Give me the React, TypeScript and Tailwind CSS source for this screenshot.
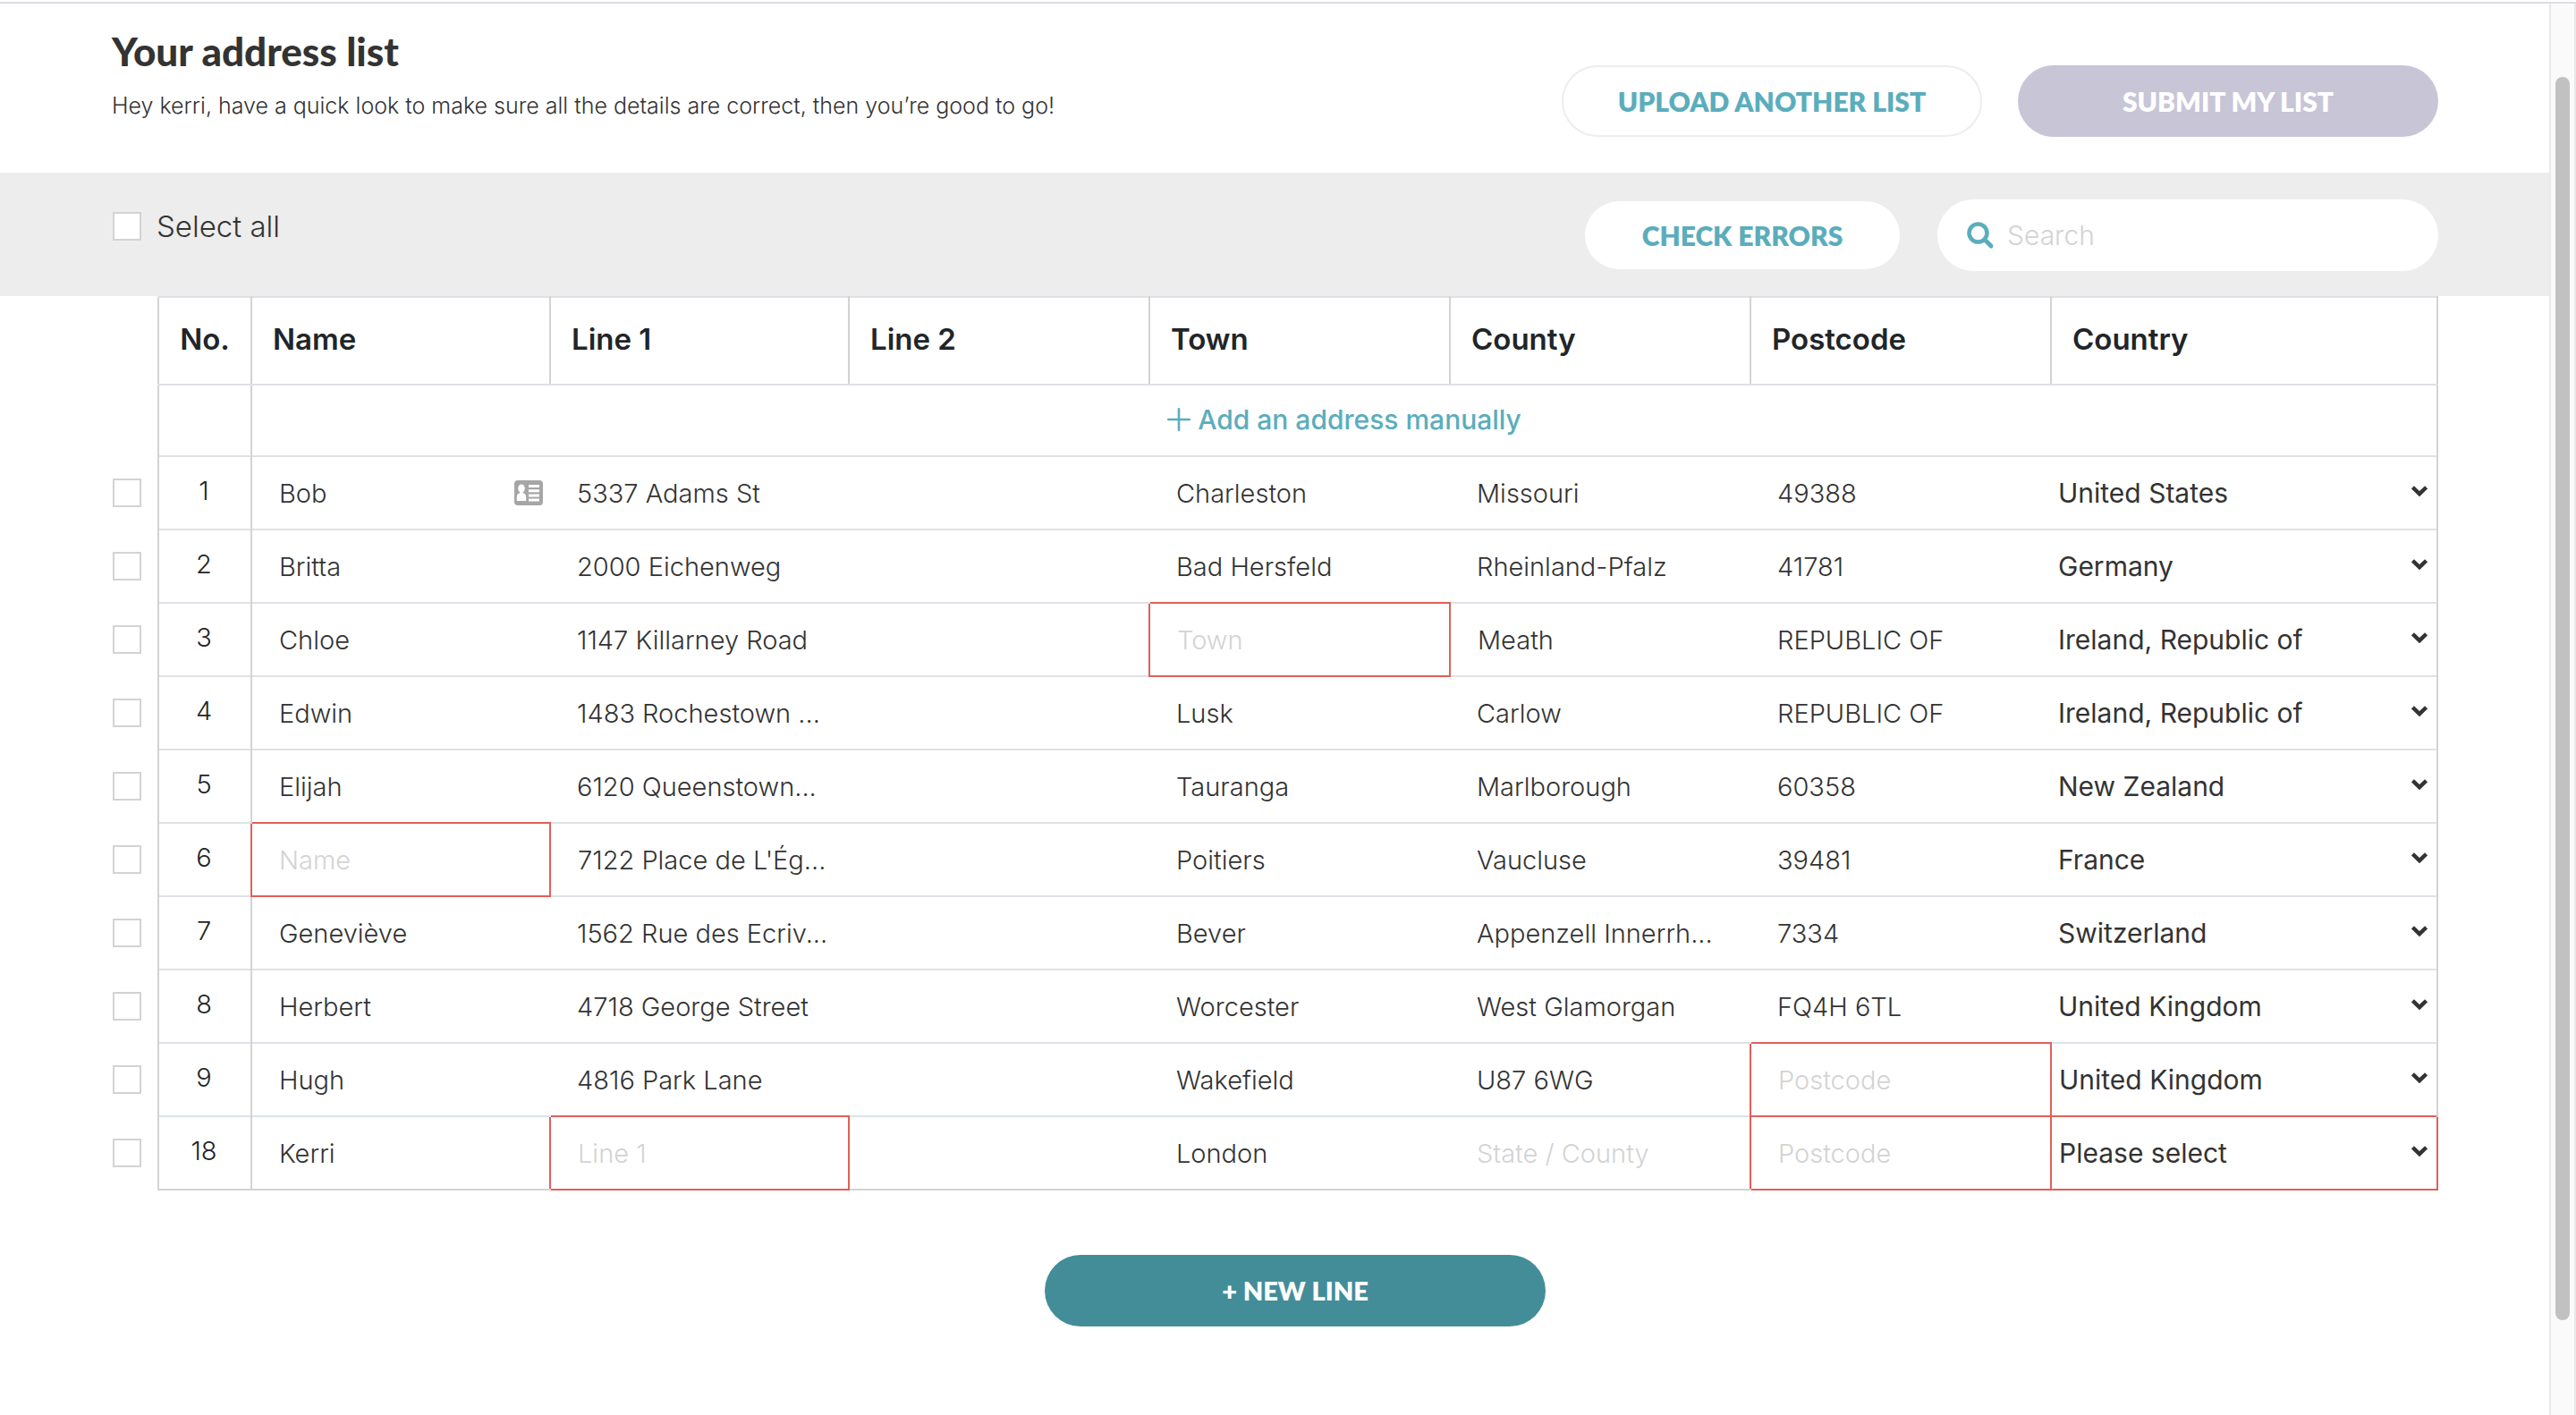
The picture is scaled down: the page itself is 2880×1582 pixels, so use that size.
import { useState } from "react";

type FieldKey = "name" | "line1" | "line2" | "town" | "county" | "postcode";

type Address = Record<FieldKey, string> & {
  no: number;
  country: string;
  saved?: boolean;
  errors?: (FieldKey | "country")[];
};

const fields: { key: FieldKey; label: string; placeholder: string }[] = [
  { key: "name", label: "Name", placeholder: "Name" },
  { key: "line1", label: "Line 1", placeholder: "Line 1" },
  { key: "line2", label: "Line 2", placeholder: "" },
  { key: "town", label: "Town", placeholder: "Town" },
  { key: "county", label: "County", placeholder: "State / County" },
  { key: "postcode", label: "Postcode", placeholder: "Postcode" },
];

const countries = [
  "Please select",
  "France",
  "Germany",
  "Ireland, Republic of",
  "New Zealand",
  "Switzerland",
  "United Kingdom",
  "United States",
];

const addresses: Address[] = [
  { no: 1, name: "Bob", line1: "5337 Adams St", line2: "", town: "Charleston", county: "Missouri", postcode: "49388", country: "United States", saved: true },
  { no: 2, name: "Britta", line1: "2000 Eichenweg", line2: "", town: "Bad Hersfeld", county: "Rheinland-Pfalz", postcode: "41781", country: "Germany" },
  { no: 3, name: "Chloe", line1: "1147 Killarney Road", line2: "", town: "", county: "Meath", postcode: "REPUBLIC OF", country: "Ireland, Republic of", errors: ["town"] },
  { no: 4, name: "Edwin", line1: "1483 Rochestown ...", line2: "", town: "Lusk", county: "Carlow", postcode: "REPUBLIC OF", country: "Ireland, Republic of" },
  { no: 5, name: "Elijah", line1: "6120 Queenstown...", line2: "", town: "Tauranga", county: "Marlborough", postcode: "60358", country: "New Zealand" },
  { no: 6, name: "", line1: "7122 Place de L'Ég...", line2: "", town: "Poitiers", county: "Vaucluse", postcode: "39481", country: "France", errors: ["name"] },
  { no: 7, name: "Geneviève", line1: "1562 Rue des Ecriv...", line2: "", town: "Bever", county: "Appenzell Innerrh...", postcode: "7334", country: "Switzerland" },
  { no: 8, name: "Herbert", line1: "4718 George Street", line2: "", town: "Worcester", county: "West Glamorgan", postcode: "FQ4H 6TL", country: "United Kingdom" },
  { no: 9, name: "Hugh", line1: "4816 Park Lane", line2: "", town: "Wakefield", county: "U87 6WG", postcode: "", country: "United Kingdom", errors: ["postcode"] },
  { no: 18, name: "Kerri", line1: "", line2: "", town: "London", county: "", postcode: "", country: "Please select", errors: ["line1", "postcode", "country"] },
];

const checkboxClass =
  "block size-8 shrink-0 cursor-pointer appearance-none border-2 border-[#d3d3d3] bg-white checked:bg-[#5badbc]";

function SearchIcon() {
  return (
    <svg viewBox="0 0 32 32" className="size-8 shrink-0" fill="none" stroke="#5badbc" strokeLinecap="round" aria-hidden="true">
      <circle cx="13.5" cy="13.5" r="10" strokeWidth="4.6" />
      <path d="M21.5 21.5 28 28" strokeWidth="5" />
    </svg>
  );
}

function ContactCardIcon() {
  return (
    <svg viewBox="0 0 32 28" className="h-7 w-8 shrink-0" aria-hidden="true">
      <rect width="32" height="28" rx="4" fill="#a6a6a6" />
      <g fill="#fff">
        <ellipse cx="8" cy="9" rx="3.8" ry="4.6" />
        <path d="M6.4 12h3.2v2c2.4.6 3.6 2.6 3.6 5v4H2.8v-4c0-2.4 1.2-4.4 3.6-5z" />
        <path d="M16 5h12v3H16zM16 10.3h12v3H16zM16 15.6h12v3H16zM16 20.4h12v3H16z" />
      </g>
    </svg>
  );
}

function Chevron() {
  return (
    <svg viewBox="0 0 18 12" className="pointer-events-none absolute top-8 right-[10px] h-3 w-[18px]" fill="none" stroke="#333" strokeWidth="4.4" aria-hidden="true">
      <path d="M1.4 1.8 9 9.2l7.6-7.4" />
    </svg>
  );
}

export default function App() {
  const [selected, setSelected] = useState<number[]>([]);
  const allSelected = selected.length === addresses.length;
  const toggle = (no: number) =>
    setSelected((s) => (s.includes(no) ? s.filter((n) => n !== no) : [...s, no]));

  return (
    <div className="flex min-h-screen flex-col bg-white pt-[2px] font-['Inter',sans-serif] text-[#333]">
      <div className="flex grow border-t-2 border-[#dcdce4]">
        <main className="min-w-0 grow">
          <header className="flex h-[189px] items-start justify-between pr-[124px] pl-[125px]">
            <div className="pt-[26px]">
              <h1 className="font-['Lato',sans-serif] text-[44px] leading-[54px] font-black">Your address list</h1>
              <p className="mt-[18px] text-[25px] leading-8 font-light">
                Hey kerri, have a quick look to make sure all the details are correct, then you’re good to go!
              </p>
            </div>
            <div className="flex gap-10 pt-[69px] font-['Lato',sans-serif] text-[30px] font-extrabold">
              <button type="button" className="h-20 w-[470px] rounded-full border-2 border-[#ededed] text-[#5badbc]">
                UPLOAD ANOTHER LIST
              </button>
              <button type="button" className="h-20 w-[470px] rounded-full bg-[#c8c5d7] text-white">
                SUBMIT MY LIST
              </button>
            </div>
          </header>

          <div className="flex h-[138px] items-start justify-between bg-[#ededed] pt-[30px] pr-[124px] pl-[126px]">
            <label className="flex h-[60px] items-center gap-[17px] text-[33px] leading-[46px] font-light">
              <input
                type="checkbox"
                className={checkboxClass}
                checked={allSelected}
                onChange={() => setSelected(allSelected ? [] : addresses.map((a) => a.no))}
              />
              Select all
            </label>
            <div className="flex items-center gap-[42px]">
              <button type="button" className="h-[76px] w-[352px] rounded-full bg-white font-['Lato',sans-serif] text-[30px] font-extrabold text-[#5badbc]">
                CHECK ERRORS
              </button>
              <label className="flex h-20 w-[560px] items-center gap-[14px] rounded-full bg-white px-8">
                <SearchIcon />
                <input
                  type="search"
                  aria-label="Search"
                  placeholder="Search"
                  className="min-w-0 grow bg-transparent text-[30px] font-light outline-none placeholder:text-[#d3d3d3]"
                />
              </label>
            </div>
          </div>

          <div className="pr-[125px] pl-[126px]">
            <table className="w-full table-fixed border-collapse text-left">
              <colgroup>
                <col className="w-[51px]" />
                <col className="w-[104px]" />
                <col className="w-[334px]" />
                <col className="w-[334px]" />
                <col className="w-[336px]" />
                <col className="w-[336px]" />
                <col className="w-[336px]" />
                <col className="w-[336px]" />
                <col className="w-[432px]" />
              </colgroup>
              <thead>
                <tr className="h-[98px] text-[33px] leading-10 text-[#212529]">
                  <td />
                  <th scope="col" className="border-2 border-[#d3d3d3] border-y-[#dee2e6] p-0 pb-1 text-center font-semibold">No.</th>
                  {fields.map((f) => (
                    <th key={f.key} scope="col" className="border-2 border-[#d3d3d3] border-y-[#dee2e6] px-[23px] pb-1 font-semibold">
                      {f.label}
                    </th>
                  ))}
                  <th scope="col" className="border-2 border-[#d3d3d3] border-y-[#dee2e6] px-[23px] pb-1 font-semibold">Country</th>
                </tr>
              </thead>
              <tbody>
                <tr className="h-20">
                  <td />
                  <td className="border-x-2 border-[#d3d3d3]" />
                  <td colSpan={7} className="border-r-2 border-[#d3d3d3] p-0 pb-[2px] text-center">
                    <button type="button" className="inline-flex h-16 items-center gap-2 text-[30px] font-medium text-[#5badbc]">
                      <svg viewBox="0 0 26 26" className="size-[26px]" stroke="#5badbc" strokeWidth="2.6" strokeLinecap="round" aria-hidden="true">
                        <path d="M13 1.3v23.4M1.3 13h23.4" />
                      </svg>
                      Add an address manually
                    </button>
                  </td>
                </tr>
                {addresses.map((a, i) => {
                  const rule =
                    i === addresses.length - 1
                      ? "border-y-2 border-t-[#dee2e6] border-b-[#d3d3d3]"
                      : "border-t-2 border-t-[#dee2e6]";
                  return (
                    <tr key={a.no} className="h-[82px] text-[29px]">
                      <td className="p-0">
                        <input
                          type="checkbox"
                          aria-label={`Select row ${a.no}`}
                          className={checkboxClass}
                          checked={selected.includes(a.no)}
                          onChange={() => toggle(a.no)}
                        />
                      </td>
                      <td className={`border-l-2 border-l-[#d3d3d3] ${rule} p-0 pr-[2px] pb-1 text-center leading-9 font-light text-[#212529]`}>{a.no}</td>
                      {fields.map((f) => (
                        <td
                          key={f.key}
                          className={
                            a.errors?.includes(f.key)
                              ? "border-2 border-[#e0605a] p-0"
                              : f.key === "name"
                                ? `border-l-2 border-l-[#d3d3d3] ${rule} p-0`
                                : `${rule} p-0`
                          }
                        >
                          <div className="flex items-center pr-2 pl-[30px]">
                            <input
                              type="text"
                              aria-label={`${f.label}, row ${a.no}`}
                              defaultValue={a[f.key]}
                              placeholder={f.placeholder}
                              className="h-12 w-full min-w-0 bg-transparent leading-9 font-light outline-none placeholder:text-[#d3d3d3]"
                            />
                            {a.saved && f.key === "name" && <ContactCardIcon />}
                          </div>
                        </td>
                      ))}
                      <td
                        className={
                          a.errors?.includes("country")
                            ? "border-2 border-[#e0605a] p-0"
                            : `border-r-2 border-r-[#d3d3d3] ${rule} p-0`
                        }
                      >
                        <div className="relative">
                          <select
                            aria-label={`Country, row ${a.no}`}
                            defaultValue={a.country}
                            className="block h-20 w-full appearance-none bg-transparent pl-2 text-[30px] font-normal outline-none"
                          >
                            {countries.map((c) => (
                              <option key={c}>{c}</option>
                            ))}
                          </select>
                          <Chevron />
                        </div>
                      </td>
                    </tr>
                  );
                })}
              </tbody>
            </table>
          </div>

          <div className="flex justify-center py-[72px] pr-[102px] pl-[148px]">
            <button type="button" className="h-20 w-[560px] rounded-full bg-[#438d99] font-['Lato',sans-serif] text-[29px] font-extrabold text-white">
              + NEW LINE
            </button>
          </div>
        </main>

        <div className="flex w-[30px] shrink-0 justify-center border-x-2 border-[#e8e8e8] bg-[#fafafa]" aria-hidden="true">
          <div className="mt-[82px] h-[1390px] w-4 rounded-full bg-[#c1c1c1]" />
        </div>
      </div>
    </div>
  );
}
